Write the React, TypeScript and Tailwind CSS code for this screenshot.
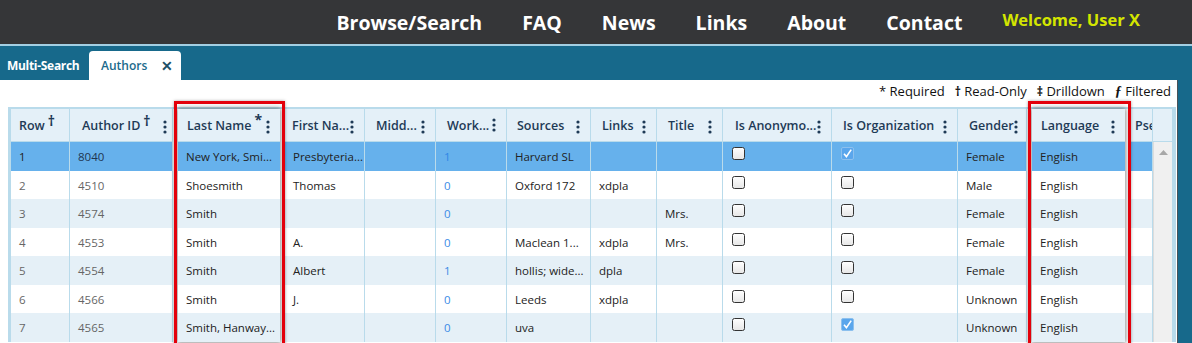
import React from 'react'

type Row = {
  row: number
  id: string
  last: string
  first: string
  works: string
  sources: string
  links: string
  title: string
  anon: boolean
  org: boolean
  gender: string
  lang: string
}

const rows: Row[] = [
  { row: 1, id: '8040', last: 'New York, Smi...', first: 'Presbyteria...', works: '1', sources: 'Harvard SL', links: '', title: '', anon: false, org: true, gender: 'Female', lang: 'English' },
  { row: 2, id: '4510', last: 'Shoesmith', first: 'Thomas', works: '0', sources: 'Oxford 172', links: 'xdpla', title: '', anon: false, org: false, gender: 'Male', lang: 'English' },
  { row: 3, id: '4574', last: 'Smith', first: '', works: '0', sources: '', links: '', title: 'Mrs.', anon: false, org: false, gender: 'Female', lang: 'English' },
  { row: 4, id: '4553', last: 'Smith', first: 'A.', works: '0', sources: 'Maclean 1...', links: 'xdpla', title: 'Mrs.', anon: false, org: false, gender: 'Female', lang: 'English' },
  { row: 5, id: '4554', last: 'Smith', first: 'Albert', works: '1', sources: 'hollis; wide...', links: 'dpla', title: '', anon: false, org: false, gender: 'Female', lang: 'English' },
  { row: 6, id: '4566', last: 'Smith', first: 'J.', works: '0', sources: 'Leeds', links: 'xdpla', title: '', anon: false, org: false, gender: 'Unknown', lang: 'English' },
  { row: 7, id: '4565', last: 'Smith, Hanway...', first: '', works: '0', sources: 'uva', links: '', title: '', anon: false, org: true, gender: 'Unknown', lang: 'English' },
]

type Col = {
  key: string
  label: string
  w: string
  mark?: string
  menu?: boolean
  hl?: boolean
  pl?: string
  pr?: string
}

const cols: Col[] = [
  { key: 'row', label: 'Row', w: 'w-[59px]', mark: '†', pl: 'pl-[8px]' },
  { key: 'id', label: 'Author ID', w: 'w-[103px]', mark: '†', menu: true, pl: 'pl-[12px]', pr: 'pr-[5px]' },
  { key: 'last', label: 'Last Name', w: 'w-[102px]', mark: '*', menu: true, hl: true, pl: 'pl-[9px]' },
  { key: 'first', label: 'First Na...', w: 'w-[80px]', menu: true, pl: 'pl-[7px]' },
  { key: 'middle', label: 'Midd...', w: 'w-[71px]', menu: true, pl: 'pl-[11px]' },
  { key: 'works', label: 'Work...', w: 'w-[71px]', menu: true, pl: 'pl-[11px]' },
  { key: 'sources', label: 'Sources', w: 'w-[84px]', menu: true, pl: 'pl-[10px]' },
  { key: 'links', label: 'Links', w: 'w-[66px]', menu: true, pl: 'pl-[11px]' },
  { key: 'title', label: 'Title', w: 'w-[66px]', menu: true, pl: 'pl-[11px]' },
  { key: 'anon', label: 'Is Anonymo...', w: 'w-[109px]', menu: true, pl: 'pl-[12px]' },
  { key: 'org', label: 'Is Organization', w: 'w-[126px]', menu: true, pl: 'pl-[11px]' },
  { key: 'gender', label: 'Gender', w: 'w-[69px]', menu: true, pl: 'pl-[11px]', pr: 'pr-[8px]' },
  { key: 'lang', label: 'Language', w: 'w-[93px]', menu: true, hl: true, pl: 'pl-[9px]' },
  { key: 'pse', label: 'Pse', w: 'w-[22px]', pl: 'pl-[4px]' },
]

function rowBg(i: number) {
  if (i === 0) return 'bg-[#66b1ec]'
  return i % 2 === 0 ? 'bg-[#e5f0f7]' : 'bg-white'
}

function Kebab() {
  return (
    <svg width="4" height="14" viewBox="0 0 4 14" className="shrink-0">
      <circle cx="2" cy="2" r="1.6" fill="#1e3a56" />
      <circle cx="2" cy="7" r="1.6" fill="#1e3a56" />
      <circle cx="2" cy="12" r="1.6" fill="#1e3a56" />
    </svg>
  )
}

function Check({ on }: { on: boolean }) {
  if (on) {
    return (
      <svg width="13" height="13" viewBox="0 0 13 13">
        <rect x="0.5" y="0.5" width="12" height="12" rx="1.5" fill="#5aa6ec" stroke="#8cc0ee" />
        <path d="M3 6.8 L5.4 9.6 L10.2 2.6" fill="none" stroke="#fff" strokeWidth="1.6" />
      </svg>
    )
  }
  return (
    <svg width="13" height="13" viewBox="0 0 13 13">
      <defs>
        <linearGradient id="cb" x1="0" y1="0" x2="0" y2="1">
          <stop offset="0" stopColor="#ffffff" />
          <stop offset="1" stopColor="#e6e6e6" />
        </linearGradient>
      </defs>
      <rect x="0.5" y="0.5" width="12" height="12" rx="2" fill="url(#cb)" stroke="#333" />
    </svg>
  )
}

function Cell({ col, r, i }: { col: Col; r: Row; i: number }) {
  const sel = i === 0
  let content: React.ReactNode = null
  let color = 'text-[#222]'
  switch (col.key) {
    case 'row':
      content = r.row
      color = sel ? 'text-[#222]' : 'text-[#666]'
      break
    case 'id':
      content = r.id
      color = sel ? 'text-[#1f3550]' : 'text-[#666]'
      break
    case 'last':
      content = r.last
      break
    case 'first':
      content = r.first
      break
    case 'works':
      content = r.works
      color = sel ? 'text-[#2f86e6]' : 'text-[#3b8be6]'
      break
    case 'sources':
      content = r.sources
      break
    case 'links':
      content = r.links
      break
    case 'title':
      content = r.title
      break
    case 'gender':
      content = r.gender
      break
    case 'lang':
      content = r.lang
      break
  }
  if (col.key === 'anon' || col.key === 'org') {
    const on = col.key === 'anon' ? r.anon : r.org
    return (
      <div className={`h-[28.5px] pl-[9px] pt-[5px] border-r border-[#b9dbeb] ${rowBg(i)}`}>
        <Check on={on} />
      </div>
    )
  }
  return (
    <div
      className={`h-[28.5px] flex items-center pl-[8px] pr-1 pt-[1px] whitespace-nowrap overflow-hidden text-[11.5px] ${color} ${rowBg(i)} ${col.hl ? '' : 'border-r border-[#b9dbeb]'}`}
    >
      {content}
    </div>
  )
}

function Column({ col }: { col: Col }) {
  return (
    <div className={`${col.w} shrink-0 flex flex-col`}>
      <div
        className={`h-[33px] flex items-center justify-between pt-[3px] ${col.pl} ${col.pr ?? 'pr-[10px]'} bg-[#e4f0f8] border-b border-[#b9dbeb] ${col.hl ? '' : 'border-r'} overflow-hidden whitespace-nowrap text-[12.5px] font-semibold text-[#1e3a56]`}
      >
        <span className="flex items-start">
          {col.label}
          {col.mark && (
            <span className={`font-bold text-[14px] leading-none ml-[3px] ${col.mark === '*' ? '-mt-[4px]' : '-mt-[3px]'}`}>
              {col.mark}
            </span>
          )}
        </span>
        {col.menu && (
          <span className={col.key === 'works' ? '-mt-[4px]' : ''}>
            <Kebab />
          </span>
        )}
      </div>
      {rows.map((r, i) => (
        <Cell key={i} col={col} r={r} i={i} />
      ))}
    </div>
  )
}

function Highlighted({ col, slot }: { col: Col; slot: string }) {
  return (
    <div className={`${slot} shrink-0 relative bg-white`}>
      <div className="relative z-10 shadow-[0_0_5px_1px_rgba(0,0,0,0.45)]">
        <Column col={col} />
      </div>
      <div className="absolute left-[1px] right-0 -top-[8px] -bottom-[30px] border-[3px] border-[#e3000b] shadow-[0_0_3px_rgba(0,0,0,0.35)] z-20 pointer-events-none" />
    </div>
  )
}

export default function App() {
  return (
    <div className="w-[1192px] h-[343px] overflow-hidden bg-[#17698b] font-['Open_Sans',sans-serif]">
      {/* Top navigation */}
      <div className="h-[44px] bg-[#353638] flex items-center justify-end pr-[52px]">
        <nav className="flex items-center gap-[40px] text-white font-bold text-[19.5px] pt-[1px]">
          <span>Browse/Search</span>
          <span>FAQ</span>
          <span>News</span>
          <span>Links</span>
          <span>About</span>
          <span>Contact</span>
          <span className="text-[#d4e600] text-[16.5px] -mt-[4px]">Welcome, User X</span>
        </nav>
      </div>
      <div className="h-[2px] bg-[#a3cfe3]" />

      {/* Tabs */}
      <div className="h-[34px] flex items-end">
        <div className="h-full w-[89px] flex items-center pt-[6px] pl-[7px] text-white font-bold text-[12px] tracking-[-0.3px]">
          Multi-Search
        </div>
        <div className="h-[29px] w-[92px] bg-white rounded-t-[4px] flex items-center pt-[1px] pl-[12px] pr-[8px] justify-between text-[#1b6a8c] text-[12px] font-semibold">
          <span>Authors</span>
          <span className="text-[#1d4f66] text-[14px] font-bold leading-none">✕</span>
        </div>
      </div>

      {/* Content */}
      <div className="flex h-[263px]">
        <div className="w-[1178px] h-full bg-white border-r border-[#4a5258] shrink-0">
          <div className="h-[23px] flex items-center justify-end pr-[6px] gap-[10px] text-[13px] text-[#111]">
            <span>* Required</span>
            <span>
              <b className="text-[12px]">†</b> Read-Only
            </span>
            <span>
              <b className="text-[12px]">‡</b> Drilldown
            </span>
            <span>
              <i className="font-bold font-['Liberation_Serif',serif] text-[14px]">ƒ</i> Filtered
            </span>
          </div>
          <div className="h-[4px]" />

          {/* Grid */}
          <div className="ml-[8px] w-[1168px] border-t-2 border-l-[3px] border-r-[4px] border-[#b9dbeb] flex">
            <Column col={cols[0]} />
            <Column col={cols[1]} />
            <Highlighted col={cols[2]} slot="w-[112px] pl-[5px] pr-[5px]" />
            {cols.slice(3, 12).map((c) => (
              <Column key={c.key} col={c} />
            ))}
            <Highlighted col={cols[12]} slot="w-[104px] pl-[5px] pr-[6px]" />
            <Column col={cols[13]} />
            {/* Scrollbar */}
            <div className="flex-1 flex flex-col">
              <div className="h-[33px] bg-[#e4f0f8] border-b border-[#b9dbeb]" />
              <div className="flex-1 bg-[#f0f0f0] border-l border-[#dcdcdc] flex justify-center pt-[8px]">
                <svg width="9" height="5" viewBox="0 0 9 5">
                  <path d="M0 5 L4.5 0 L9 5 Z" fill="#a8a8a8" />
                </svg>
              </div>
            </div>
          </div>
        </div>
        <div className="flex-1" />
      </div>
    </div>
  )
}
